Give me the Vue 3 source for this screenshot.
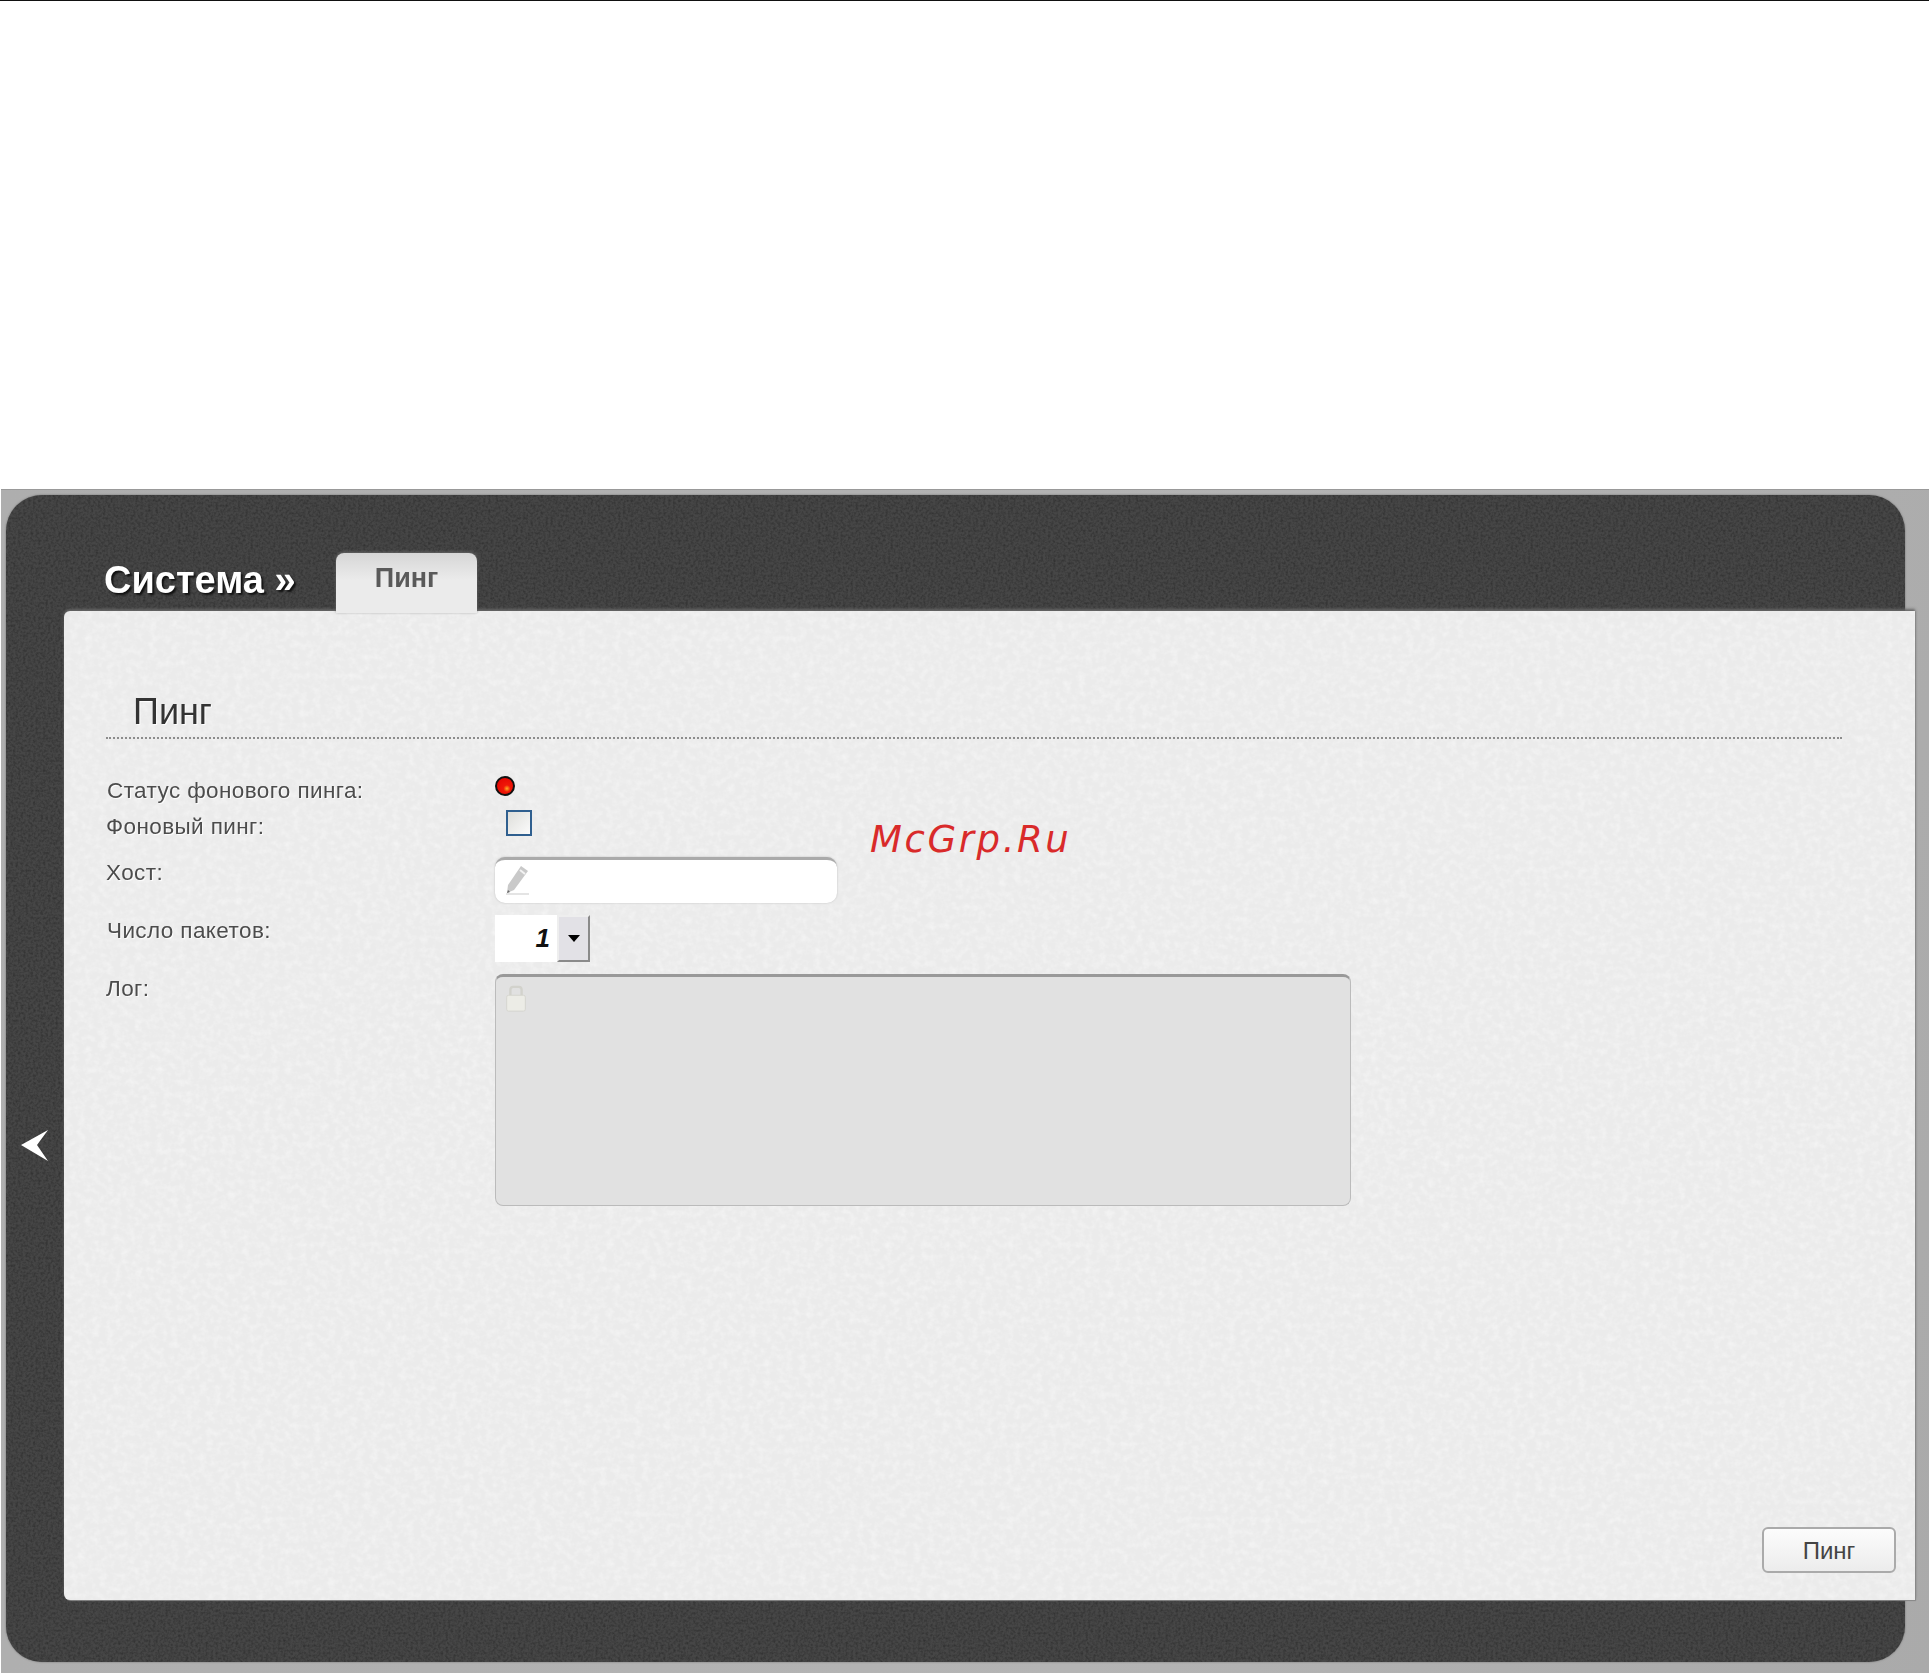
<template>
  <div class="page">
    <div class="topline"></div>
    <div class="backdrop">
      <div class="panel">
        <svg class="grain grain-dark" aria-hidden="true"><filter id="darkgrain"><feTurbulence type="fractalNoise" baseFrequency="0.4" numOctaves="2" seed="4"/><feColorMatrix values="0 0 0 0 0  0 0 0 0 0  0 0 0 0 0  0 0 0 .55 -0.2"/></filter><rect width="100%" height="100%" filter="url(#darkgrain)"/></svg>
        <div class="head">
          <h1 class="crumb">Система »</h1>
          <div class="tab">Пинг</div>
        </div>
        <div class="side">
          <svg class="back" viewBox="0 0 28 32" aria-label="Назад"><path d="M0 15 L27 0 L16 15 L27 31 Z" fill="#fff"/></svg>
          <main class="content">
            <svg class="grain grain-light" aria-hidden="true"><filter id="lightgrain"><feTurbulence type="fractalNoise" baseFrequency="0.14 0.16" numOctaves="3" seed="9"/><feColorMatrix values="0 0 0 0 1  0 0 0 0 1  0 0 0 0 1  0 0 0 .8 -0.32"/></filter><rect width="100%" height="100%" filter="url(#lightgrain)"/></svg>
            <h2 class="title">Пинг</h2>
            <div class="form">
              <div class="label l1">Статус фонового пинга:</div>
              <div class="control"><span class="led"></span></div>
              <div class="label l2">Фоновый пинг:</div>
              <div class="control"><span class="check"></span></div>
              <div class="label l3">Хост:</div>
              <div class="control">
                <div class="input">
                  <svg class="pencil" viewBox="0 0 26 32"><path d="M17 1 L24 6 L10 25 L3 28 L4 20 Z" fill="#c9c9c9"/><path d="M16 5 L21 9" stroke="#f2f2f2" stroke-width="2"/><path d="M2 29 L25 29" stroke="#e4e4e4" stroke-width="2"/><path d="M3 28 L6 27 L4 25 Z" fill="#666"/></svg>
                </div>
              </div>
              <div class="label l4">Число пакетов:</div>
              <div class="control">
                <div class="spin">
                  <span class="spin-value">1</span>
                  <span class="spin-btn"><i class="caret"></i></span>
                </div>
              </div>
              <div class="label l5">Лог:</div>
              <div class="control">
                <div class="log">
                  <svg class="lock" viewBox="0 0 24 30"><path d="M6 11 V5 Q6 2 9 2 H15 Q18 2 18 5 V11" fill="none" stroke="#d2d2cc" stroke-width="2.5"/><rect x="2" y="11" width="20" height="17" rx="2" fill="#ecece6" stroke="#d4d4ce"/></svg>
                </div>
              </div>
            </div>
            <div class="actions"><button class="btn" type="button">Пинг</button></div>
          </main>
        </div>
      </div>
    </div>
    <div class="watermark">McGrp.Ru</div>
  </div>
</template>

<script setup>
</script>

<style>
html, body { background: #fff; }
</style>

<style scoped>
.page { position: relative; width: 1929px; height: 1675px; font-family: "Liberation Sans", Arial, sans-serif; overflow: hidden; background: #fff; }
.topline { height: 1px; background: #111; }
.backdrop { margin: 488px 0 0 1px; height: 1184px; padding: 5px 24px 0 5px; box-sizing: border-box; background: linear-gradient(100deg, #aeaeae 0%, #b4b4b4 60%, #aaaaaa 100%); border-top: 1px solid #999; }
.panel { position: relative; height: 1167px; background: #464646; border-radius: 36px; box-shadow: 0 0 2px #666; }
.grain { position: absolute; inset: 0; width: 100%; height: 100%; pointer-events: none; }
.grain-dark { border-radius: 36px; }
.grain-light { border-radius: 6px 0 0 6px; }
.head { position: relative; z-index: 1; height: 116px; padding-left: 98px; box-sizing: border-box; display: flex; align-items: flex-end; }
.crumb { margin: 0 38px 6px 0; width: 194px; white-space: nowrap; font-size: 38px; line-height: 50px; font-weight: 700; color: #fff; text-shadow: 2px 2px 2px #111; filter: blur(.5px); }
.tab { width: 141px; height: 60px; margin-bottom: -2px; box-sizing: border-box; padding-top: 10px; text-align: center; font-size: 27px; line-height: 30px; font-weight: 700; color: #5a5a5a; background: linear-gradient(#d6d6d6, #ebebeb 45%); border-radius: 8px 8px 0 0; box-shadow: 0 -1px 3px #666; filter: blur(.25px); }
.side { position: relative; display: flex; align-items: flex-start; height: 989px; }
.back { position: absolute; left: 15px; top: 519px; width: 28px; height: 32px; }
.content { position: relative; margin: 0 -10px 0 58px; flex: 1; height: 989px; box-sizing: border-box; padding: 0 73px 0 42px; background: #ebebeb; border-radius: 6px 0 0 6px; box-shadow: 1px 1px 1px #888, 0 -2px 3px #666; }
.title { position: relative; margin: 0; padding: 80px 0 0 27px; height: 128px; box-sizing: border-box; font-size: 36px; line-height: 42px; font-weight: 400; color: #333; border-bottom: 2px dotted #8c8c8c; text-shadow: 1px 1px 1px #fff; filter: blur(.3px); }
.form { position: relative; display: grid; grid-template-columns: 389px 856px; grid-template-rows: 34px 46px 59px 59px 240px; margin-top: 37px; }
.label { font-size: 22.5px; letter-spacing: .4px; line-height: 26px; color: #4c4c4c; text-shadow: 1px 1px 1px #fff; filter: blur(.35px); }
.l1 { padding-top: 2px; padding-left: 1px; }
.l2 { padding-top: 4px; }
.l3 { padding-top: 4px; }
.l4 { padding-top: 3px; padding-left: 1px; }
.l5 { padding-top: 2px; }
.control { position: relative; }
.led { display: block; width: 20px; height: 20px; box-sizing: border-box; border-radius: 50%; border: 2px solid #111; background: radial-gradient(circle at 62% 66%, #ffb020 0, #f01808 24%, #e00000 100%); }
.check { display: block; width: 26px; height: 26px; margin: 0 0 0 11px; box-sizing: border-box; border: 2px solid #2f5f8f; background: linear-gradient(135deg, #dededa, #fbfbfb); }
.input { position: relative; width: 342px; height: 46px; margin-top: 1px; box-sizing: border-box; border-radius: 10px; background: #fff; border-top: 3px solid #aaa; box-shadow: 0 0 2px #bbb; }
.pencil { position: absolute; left: 9px; top: 5px; width: 26px; height: 32px; }
.spin { display: flex; width: 95px; height: 47px; }
.spin-value { width: 62px; background: #fff; box-sizing: border-box; text-align: right; padding-right: 7px; font-size: 26px; line-height: 46px; font-weight: 700; font-style: italic; color: #111; }
.spin-btn { display: flex; align-items: center; justify-content: center; width: 33px; box-sizing: border-box; background: #e2e1e6; border: 2px solid; border-color: #eee #8a8a8a #8a8a8a #eee; }
.caret { border-style: solid; border-width: 7px 6px 0; border-color: #000 transparent transparent; }
.log { position: relative; width: 856px; height: 232px; box-sizing: border-box; border-radius: 8px; background: #e1e1e1; border: 1px solid #bbb; border-top: 3px solid #999; }
.lock { position: absolute; left: 8px; top: 8px; width: 24px; height: 28px; }
.actions { position: absolute; right: 19px; bottom: 27px; }
.btn { display: block; width: 134px; height: 46px; padding: 2px 0 0; font: 400 24px "Liberation Sans", Arial, sans-serif; color: #444; background: linear-gradient(#fcfcfc, #ececec); border: 2px solid #aaa; border-radius: 6px; }
.watermark { position: absolute; left: 870px; top: 813px; font-family: "DejaVu Sans", sans-serif; font-style: italic; font-size: 37px; line-height: 54px; letter-spacing: 2.6px; color: #d92a2a; }
</style>
